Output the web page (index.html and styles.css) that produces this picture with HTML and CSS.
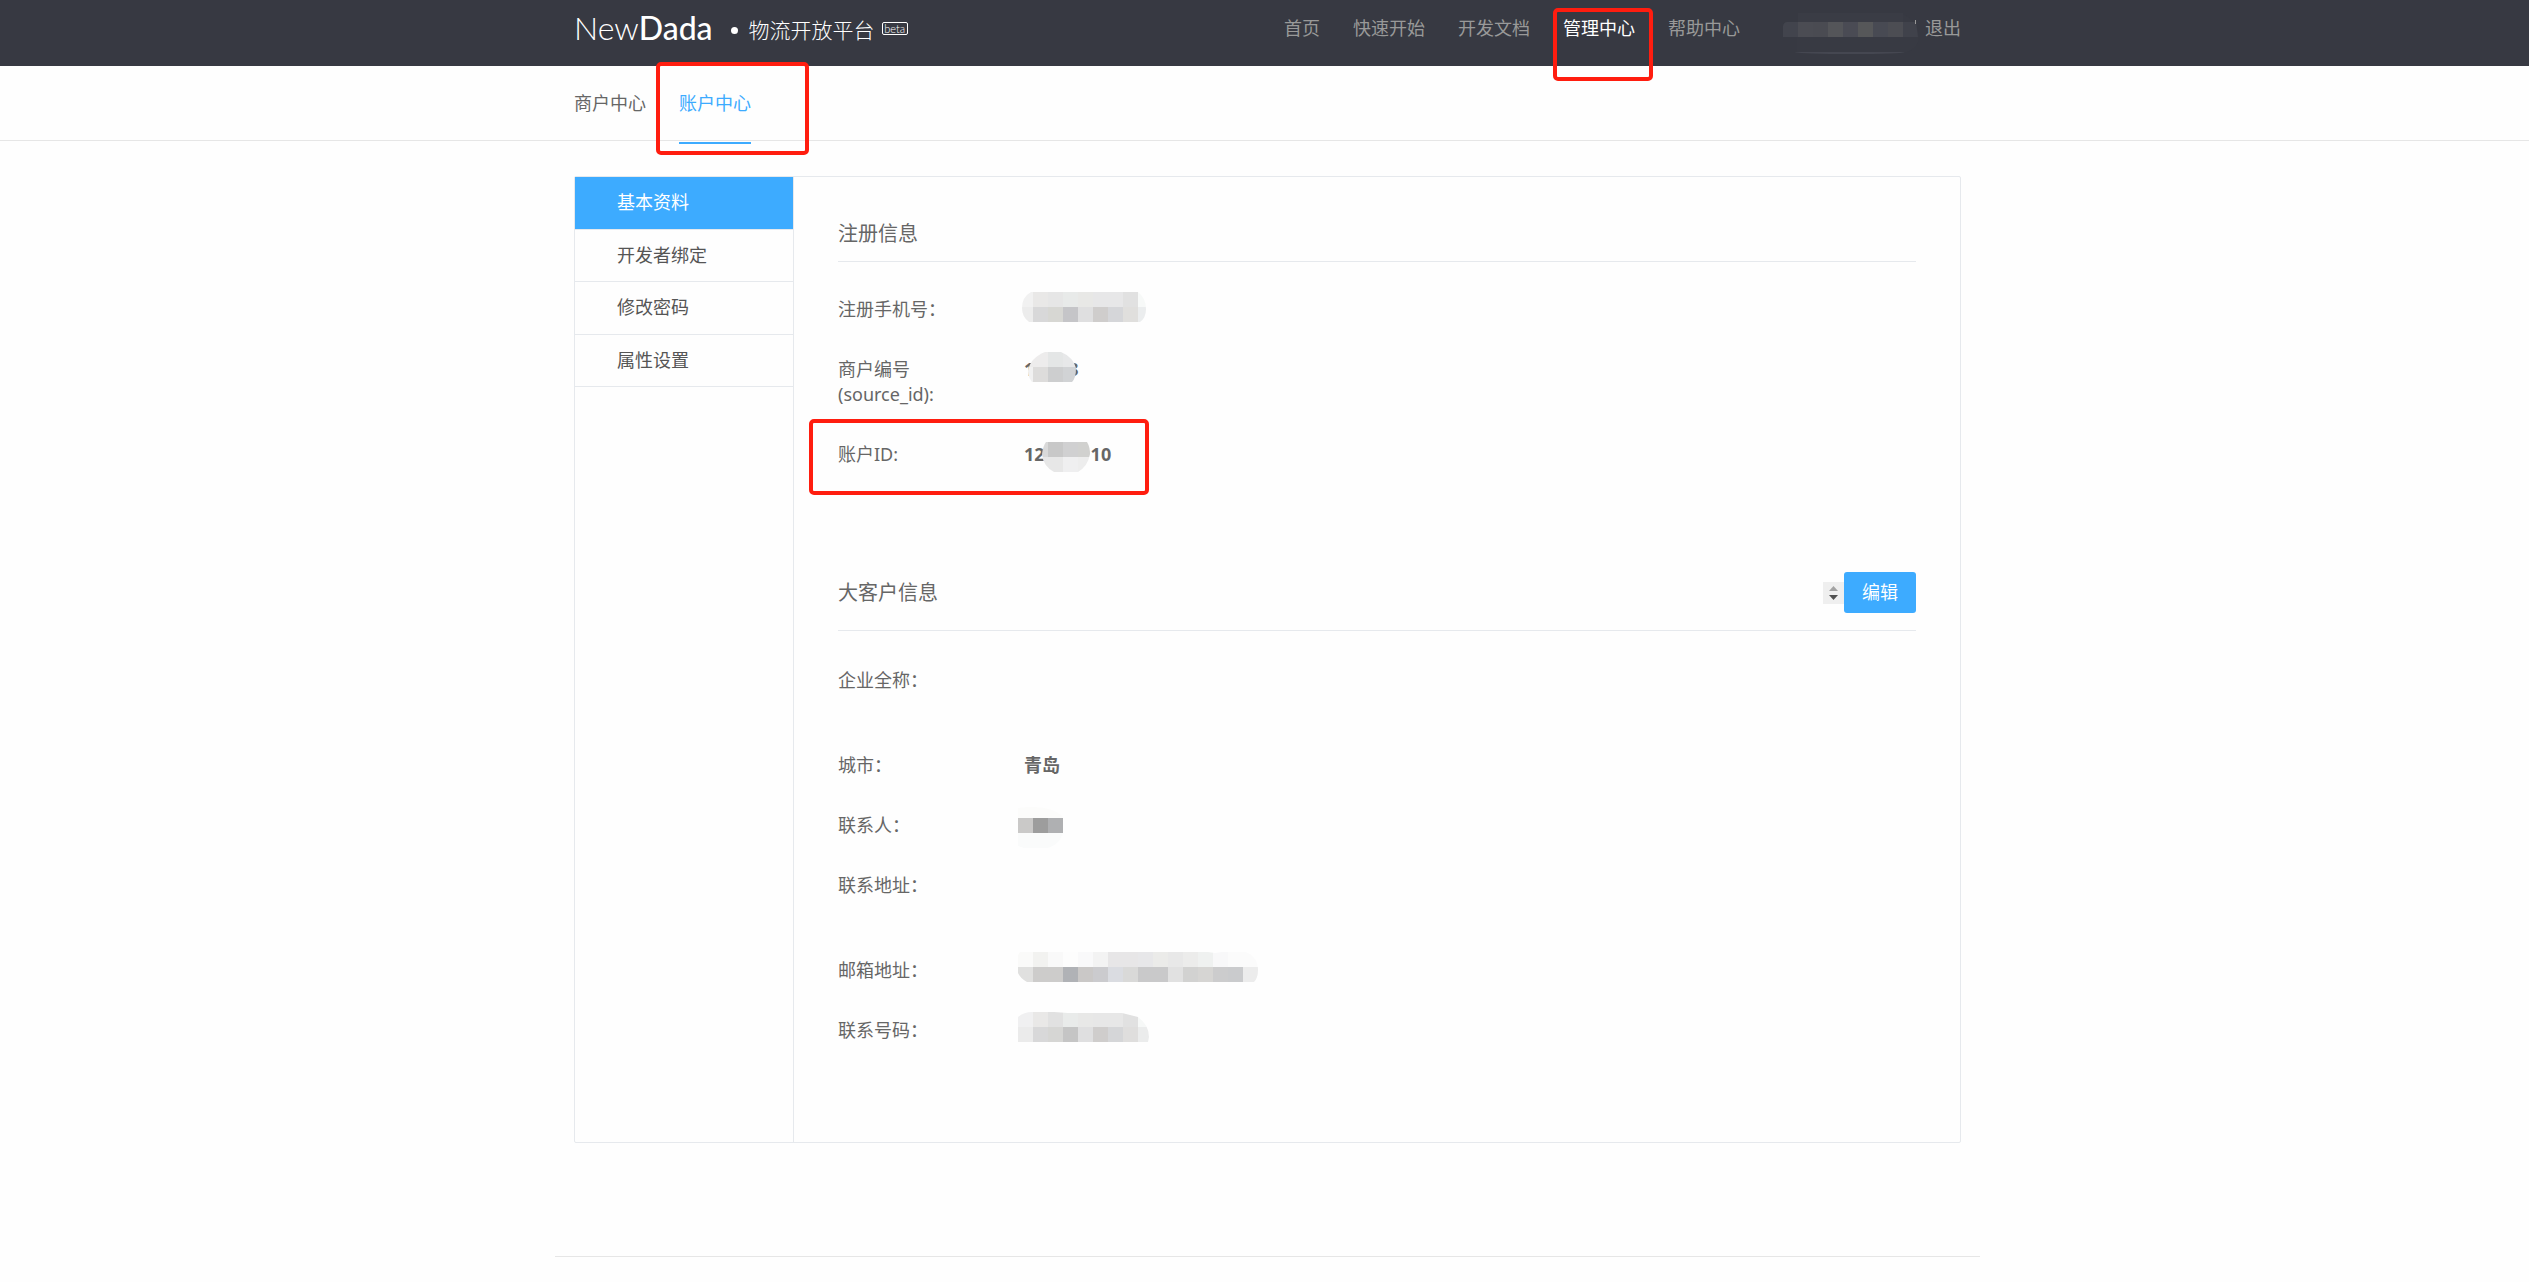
FILE: index.html
```html
<!DOCTYPE html>
<html lang="zh-CN">
<head>
<meta charset="utf-8">
<meta name="viewport" content="width=device-width, initial-scale=1">
<title>NewDada 物流开放平台</title>
<link rel="stylesheet" href="styles.css">
</head>
<body>
<header class="topbar">
  <div class="container topbar-inner">
    <a class="brand" href="#">
      <span class="logo">New<b>Dada</b></span>
      <i class="dot"></i>
      <span class="slogan">物流开放平台</span>
      <span class="beta">beta</span>
    </a>
    <nav class="mainnav">
      <a href="#">首页</a>
      <a href="#">快速开始</a>
      <a href="#">开发文档</a>
      <a href="#" class="current">管理中心<span class="mark mark-nav"></span></a>
      <a href="#">帮助中心</a>
    </nav>
    <div class="user">
      <svg class="mask-user" width="136" height="44" viewBox="-1 0 136 44">
        <path d="M15 7H120V16H15Z" fill="#3a3c45"/>
        <path d="M120 8Q136 16 136 31Q136 42 124 46H14V31H120Z" fill="#383a43"/>
        <path d="M4 16H15V31H0V20Q1 16 4 16Z" fill="#42444d"/>
        <path d="M15 16h15v15h-15z" fill="#4b4c53"/><path d="M30 16h15v15h-15z" fill="#4a4b52"/>
        <path d="M45 16h15v15h-15z" fill="#545559"/><path d="M60 16h15v15h-15z" fill="#4a4b54"/>
        <path d="M75 16h15v15h-15z" fill="#565759"/><path d="M90 16h15v15h-15z" fill="#484a53"/>
        <path d="M105 16h15v15h-15z" fill="#4c4d53"/><path d="M120 16h13l2 15h-15z" fill="#40424b"/>
        <path d="M11 46H122Q118 48 68 48Q20 48 11 46Z" fill="#454751"/>
        <path d="M132 14h1v4h-1z" fill="#999"/>
      </svg>
      <a href="#">退出</a>
    </div>
  </div>
</header>

<nav class="subnav">
  <div class="container subnav-inner">
    <a href="#">商户中心</a>
    <a href="#" class="current">账户中心<span class="mark mark-sub"></span></a>
  </div>
</nav>

<div class="page">
<main class="container panel">
  <nav class="sidebar">
    <ul>
      <li><a href="#" class="current">基本资料</a></li>
      <li><a href="#">开发者绑定</a></li>
      <li><a href="#">修改密码</a></li>
      <li><a href="#">属性设置</a></li>
    </ul>
  </nav>
  <div class="content">
    <section class="register">
      <h2>注册信息</h2>
      <dl>
        <div class="row"><dt>注册手机号：</dt><dd>
          <svg class="mask mask-phone" width="124" height="30" viewBox="0 0 124 30">
            <clipPath id="c1"><path d="M9 0H116Q124 6 124 17Q124 26 118 30H7Q0 25 0 16Q0 5 9 0Z"/></clipPath>
            <g clip-path="url(#c1)">
              <path d="M0 0h11v15H0z" fill="#f1f1f1"/><path d="M11 0h15v15H11z" fill="#e9e8e7"/><path d="M26 0h15v15H26z" fill="#e6e6e6"/><path d="M41 0h15v15H41z" fill="#e8eae9"/><path d="M56 0h15v15H56z" fill="#e8e8e6"/><path d="M71 0h30v15H71z" fill="#e7e7e8"/><path d="M101 0h15v15h-15z" fill="#e1e1e1"/><path d="M116 0h8v15h-8z" fill="#f7f9f8"/>
              <path d="M0 15h11v15H0z" fill="#ececec"/><path d="M11 15h15v15H11z" fill="#d8d8d9"/><path d="M26 15h15v15H26z" fill="#d7d7d3"/><path d="M41 15h15v15H41z" fill="#c5c5c8"/><path d="M56 15h15v15H56z" fill="#dfdfe0"/><path d="M71 15h15v15H71z" fill="#cfcdcc"/><path d="M86 15h15v15H86z" fill="#d5d6d9"/><path d="M101 15h15v15h-15z" fill="#e0dfdd"/><path d="M116 15h8v15h-8z" fill="#ebedee"/>
            </g>
          </svg></dd></div>
        <div class="row"><dt>商户编号<br>(source_id):</dt><dd><b>1</b><b class="tail-source">3</b>
          <svg class="mask mask-source" width="48" height="30" viewBox="0 0 48 30">
            <clipPath id="c2"><path d="M17 0H33Q45 5 48 16Q48 26 44 30H4Q0 25 0 19Q2 6 17 0Z"/></clipPath>
            <g clip-path="url(#c2)">
              <path d="M0 0h20v15H0z" fill="#edecec"/><path d="M20 0h15v15H20z" fill="#e4e6e6"/><path d="M35 0h13v15H35z" fill="#e7e8e9"/>
              <path d="M0 15h5v15H0z" fill="#f1f1f1"/><path d="M5 15h15v15H5z" fill="#dddcdb"/><path d="M20 15h15v15H20z" fill="#cdcecf"/><path d="M35 15h13v15H35z" fill="#d1d3d5"/>
            </g>
          </svg></dd></div>
        <div class="row"><dt>账户ID:<span class="mark mark-id"></span></dt><dd><b>12</b><b class="tail-id">10</b>
          <svg class="mask mask-id" width="48" height="30" viewBox="0 0 48 30">
            <clipPath id="c3"><path d="M4 0H45Q48 5 48 12Q46 24 36 30H12Q1 24 0 12Q1 4 4 0Z"/></clipPath>
            <g clip-path="url(#c3)">
              <path d="M0 0h6v15H0z" fill="#d9d9d9"/><path d="M6 0h15v15H6z" fill="#c8c8c8"/><path d="M21 0h15v15H21z" fill="#d0d0d1"/><path d="M36 0h12v15H36z" fill="#d1d1cf"/>
              <path d="M0 15h21v15H0z" fill="#e7e7e7"/><path d="M21 15h15v15H21z" fill="#efeff0"/><path d="M36 15h12v15H36z" fill="#ededed"/>
            </g>
          </svg></dd></div>
      </dl>
    </section>

    <section class="customer">
      <div class="heading">
        <h2>大客户信息</h2>
        <span class="stepper">
          <input type="number" aria-label="数量">
          <svg width="21" height="22" viewBox="0 0 21 22"><path d="M6 9L10.500 4L15 9Z" fill="#a3a3a3"/><path d="M6 13L10.500 18L15 13Z" fill="#505050"/></svg>
        </span>
        <button type="button">编辑</button>
      </div>
      <dl>
        <div class="row tall"><dt>企业全称：</dt><dd></dd></div>
        <div class="row"><dt>城市：</dt><dd><b>青岛</b></dd></div>
        <div class="row"><dt>联系人：</dt><dd>
          <svg class="mask mask-edge" width="45" height="41" viewBox="0 0 45 41">
            <path d="M0 1Q20 -2 34 3Q43 7 45 11H0Z" fill="#fcfcfb"/>
            <path d="M0 11h15v15H0z" fill="#cac9c8"/><path d="M15 11h15v15H15z" fill="#9d9d9d"/><path d="M30 11h15v15H30z" fill="#afb0b2"/>
            <path d="M0 26H45Q42 37 30 41H6L0 39Z" fill="#fafbfb"/>
          </svg></dd></div>
        <div class="row tall"><dt>联系地址：</dt><dd></dd></div>
        <div class="row"><dt>邮箱地址：</dt><dd>
          <svg class="mask mask-edge" width="240" height="30" viewBox="0 0 240 30">
            <clipPath id="c4"><path d="M2 0H190L197 1L204 0H228Q240 5 240 18Q240 26 236 30H9Q2 26 0 21V3Z"/></clipPath>
            <g clip-path="url(#c4)">
              <path d="M0 0h15v15H0z" fill="#fafaf9"/><path d="M15 0h15v15H15z" fill="#f2f2f0"/><path d="M30 0h15v15H30z" fill="#f9f9f9"/><path d="M45 0h15v15H45z" fill="#fdfdfd"/><path d="M60 0h15v15H60z" fill="#f9f9fa"/><path d="M75 0h15v15H75z" fill="#f3f3f3"/><path d="M90 0h30v15H90z" fill="#e7e6e7"/><path d="M120 0h15v15h-15z" fill="#e7e7e9"/><path d="M135 0h15v15h-15z" fill="#ebebe9"/><path d="M150 0h15v15h-15z" fill="#e8e8e8"/><path d="M165 0h15v15h-15z" fill="#ececeb"/><path d="M180 0h15v15h-15z" fill="#eff1f0"/><path d="M195 0h15v15h-15z" fill="#f8f8f9"/><path d="M210 0h30v15h-30z" fill="#fbfbfb"/>
              <path d="M0 15h15v15H0z" fill="#e0e0df"/><path d="M15 15h30v15H15z" fill="#cdcccb"/><path d="M45 15h15v15H45z" fill="#b0b2b6"/><path d="M60 15h15v15H60z" fill="#cac8c7"/><path d="M75 15h15v15H75z" fill="#cbcbce"/><path d="M90 15h15v15H90z" fill="#dadce1"/><path d="M105 15h15v15h-15z" fill="#d9d9d8"/><path d="M120 15h30v15h-30z" fill="#c9c9ca"/><path d="M150 15h15v15h-15z" fill="#e1e1e1"/><path d="M165 15h15v15h-15z" fill="#d2d2d1"/><path d="M180 15h15v15h-15z" fill="#d6d5d3"/><path d="M195 15h15v15h-15z" fill="#cccccd"/><path d="M210 15h15v15h-15z" fill="#cacbcd"/><path d="M225 15h15v15h-15z" fill="#ececec"/>
            </g>
          </svg></dd></div>
        <div class="row"><dt>联系号码：</dt><dd>
          <svg class="mask mask-edge" width="131" height="30" viewBox="0 0 131 30">
            <clipPath id="c5"><path d="M0 5Q6 0 14 0H36L50 1H104L120 5Q131 13 131 25L130 30H0Z"/></clipPath>
            <g clip-path="url(#c5)">
              <path d="M0 0h15v15H0z" fill="#f0f0f1"/><path d="M15 0h15v15H15z" fill="#e9e8e7"/><path d="M30 0h15v15H30z" fill="#e1e1e1"/><path d="M45 0h15v15H45z" fill="#e9ebea"/><path d="M60 0h15v15H60z" fill="#e8e8e7"/><path d="M75 0h30v15H75z" fill="#e7e7e7"/><path d="M105 0h15v15h-15z" fill="#e1e1e1"/><path d="M120 0h11v15h-11z" fill="#f6f8f7"/>
              <path d="M0 15h15v15H0z" fill="#ebebeb"/><path d="M15 15h15v15H15z" fill="#d8d8d9"/><path d="M30 15h15v15H30z" fill="#d6d6d4"/><path d="M45 15h15v15H45z" fill="#c5c5c5"/><path d="M60 15h15v15H60z" fill="#dfdfe0"/><path d="M75 15h15v15H75z" fill="#cfcdcc"/><path d="M90 15h15v15H90z" fill="#d5d6d8"/><path d="M105 15h15v15h-15z" fill="#dfdedd"/><path d="M120 15h11v15h-11z" fill="#ebecec"/>
            </g>
          </svg></dd></div>
      </dl>
    </section>
  </div>
</main>

<footer class="footer"></footer>
</div>
</body>
</html>
```
FILE: styles.css
```css
* { box-sizing: border-box; }

body {
  margin: 0;
  background: #fefefe;
  color: #666;
  font: 400 18px/25px "Noto Sans", "Noto Sans CJK SC", sans-serif;
}

a { color: inherit; text-decoration: none; }
h2, dl, dd, ul { margin: 0; padding: 0; }
svg { display: block; overflow: visible; }

.topbar, .subnav, .page { padding-left: 6px; }
.container { width: 100%; max-width: 1387px; margin: 0 auto; }

/* top bar */
.topbar { background: #373942; color: #999; }
.topbar-inner { display: flex; height: 66px; padding-bottom: 10px; align-items: center; }
.brand { display: flex; align-items: center; color: #fff; margin-right: auto; }
.logo { font: 300 32px/40px Lato, sans-serif; }
.logo b { font-weight: 500; }
.dot { width: 7px; height: 7px; margin: 4px 11px 0 18px; border-radius: 50%; background: #fff; }
.slogan { font-size: 21px; font-weight: 300; line-height: 30px; margin-top: 4px; }
.beta {
  margin: 1px 0 0 7px;
  width: 26px;
  border: 1px solid #fff;
  border-radius: 2px;
  font: 300 11px/11px Lato, sans-serif;
  text-align: center;
}
.mainnav { display: flex; gap: 33px; }
.mainnav a { position: relative; }
.mainnav .current { color: #fff; }
.user { display: flex; align-items: center; gap: 7px; margin-left: 42px; }

/* second-level tabs */
.subnav { border-bottom: 1px solid #e6e6e6; }
.subnav-inner { display: flex; gap: 33px; }
.subnav a { position: relative; height: 74px; line-height: 74px; }
.subnav .current { color: #3dabff; }
.subnav .current::after {
  content: "";
  position: absolute;
  left: 0;
  right: 0;
  bottom: -4px;
  height: 2px;
  background: #3dabff;
}

/* hand-drawn highlight frames */
.mark { position: absolute; border: 4px solid #ff1d0f; border-radius: 5px; pointer-events: none; }
.mark-nav { left: -10px; top: -8px; width: 100px; height: 73px; }
.mark-sub { left: -23px; top: -4px; width: 153px; height: 93px; z-index: 2; }
.mark-id { left: -29px; top: -23px; width: 340px; height: 76px; }

/* panel */
.panel {
  display: flex;
  margin-top: 35px;
  border: 1px solid #e6e9ed;
  border-radius: 2px;
}
.sidebar { width: 219px; flex: none; border-right: 1px solid #e6e9ed; color: #555; }
.sidebar ul { display: grid; grid-auto-rows: 1fr; height: 210px; list-style: none; }
.sidebar li { display: flex; border-bottom: 1px solid #e6e9ed; }
.sidebar a { display: flex; flex: 1; align-items: center; padding-left: 42px; }
.sidebar .current { background: #3dabff; color: #fff; }

.content { flex: 1; min-width: 0; padding: 44px 44px 99px; }
h2 { font-size: 20px; font-weight: 400; line-height: 25px; }
.register h2 { padding-bottom: 15px; border-bottom: 1px solid #e6e9ed; }
.register dl { margin-top: 35px; }
.customer { margin-top: 105px; }
.heading { display: flex; align-items: center; padding-bottom: 17px; border-bottom: 1px solid #e6e9ed; }
.heading h2 { margin-right: auto; }
.customer dl { margin-top: 37px; }

dl { display: grid; gap: 35px; }
.row { display: flex; position: relative; }
.row.tall { min-height: 50px; }
dt { width: 186px; flex: none; }
dd { position: relative; flex: 1; height: 25px; }
b { font-weight: 700; }

/* blurred-out values */
.mask { position: absolute; }
.mask-phone { left: -2px; top: -5px; }
.mask-source { left: 4px; top: -5px; }
.mask-id { left: 18px; top: 0; }
.mask-edge { left: -6px; top: -6px; }
.tail-source { margin-left: 34px; }
.tail-id { margin-left: 46px; }

.stepper { position: relative; width: 21px; height: 22px; background: #efefef; }
.stepper input { position: absolute; inset: 0; width: 100%; height: 100%; border: 0; padding: 0; opacity: 0; }
.stepper svg { position: relative; pointer-events: none; }
button {
  width: 72px;
  height: 41px;
  border: 0;
  border-radius: 3px;
  background: #3dabff;
  color: #fff;
  font: inherit;
}

.footer { max-width: 1425px; height: 26px; margin: 113px auto 0; border-top: 1px solid #e6e6e6; }
```
